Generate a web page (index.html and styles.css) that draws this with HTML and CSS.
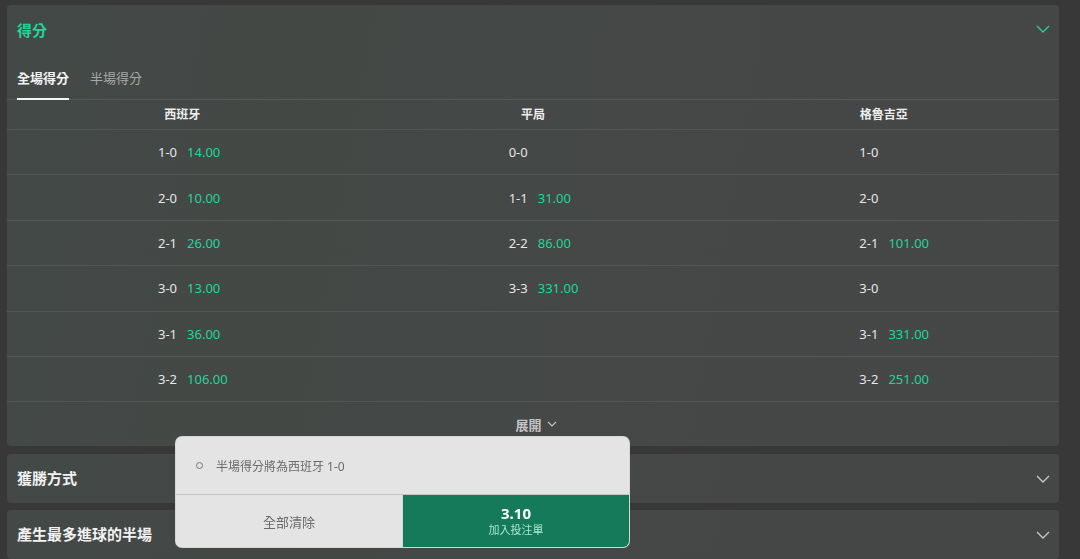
FILE: index.html
```html
<!DOCTYPE html>
<html>
<head>
	<title>得分</title>
	<meta charset="utf-8">
	<meta name="viewport" content="width=device-width, initial-scale=1">
	<link rel="stylesheet" href="styles.css">
</head>
<body>
	<div class="panel main">
		<div class="panel-head">
			<span class="panel-title active">得分</span>
			<svg class="chev green" width="14" height="8" viewBox="0 0 14 8"><polyline points="1,1 7,7 13,1" fill="none" stroke="currentColor" stroke-width="1.3"/></svg>
		</div>
		<div class="tabs">
			<span class="tab selected">全場得分</span>
			<span class="tab">半場得分</span>
		</div>
		<div class="grid head-row">
			<div class="col-title">西班牙</div>
			<div class="col-title">平局</div>
			<div class="col-title">格魯吉亞</div>
		</div>
		<div class="rows"></div>
		<div class="more">展開
			<svg width="10" height="6" viewBox="0 0 10 6"><polyline points="1,1 5,5 9,1" fill="none" stroke="currentColor" stroke-width="1.1"/></svg>
		</div>
	</div>

	<div class="panel closed">
		<div class="panel-head">
			<span class="panel-title">獲勝方式</span>
			<svg class="chev" width="14" height="8" viewBox="0 0 14 8"><polyline points="1,1 7,7 13,1" fill="none" stroke="currentColor" stroke-width="1.3"/></svg>
		</div>
	</div>

	<div class="panel closed">
		<div class="panel-head">
			<span class="panel-title">產生最多進球的半場</span>
			<svg class="chev" width="14" height="8" viewBox="0 0 14 8"><polyline points="1,1 7,7 13,1" fill="none" stroke="currentColor" stroke-width="1.3"/></svg>
		</div>
	</div>

	<div class="slip">
		<div class="slip-item">
			<span class="dot"></span>
			<span>半場得分將為西班牙 1-0</span>
		</div>
		<div class="slip-actions">
			<button class="clear">全部清除</button>
			<button class="add">
				<span class="price">3.10</span>
				<span class="add-label">加入投注單</span>
			</button>
		</div>
	</div>

<script>
	const rows = [
		[['1-0', '14.00'], ['0-0', ''], ['1-0', '']],
		[['2-0', '10.00'], ['1-1', '31.00'], ['2-0', '']],
		[['2-1', '26.00'], ['2-2', '86.00'], ['2-1', '101.00']],
		[['3-0', '13.00'], ['3-3', '331.00'], ['3-0', '']],
		[['3-1', '36.00'], null, ['3-1', '331.00']],
		[['3-2', '106.00'], null, ['3-2', '251.00']]
	];

	const container = document.querySelector('.rows');
	let html = '';
	rows.forEach(row => {
		html += '<div class="grid row">';
		row.forEach(cell => {
			if (!cell) {
				html += '<div class="cell"></div>';
				return;
			}
			html += `
			<div class="cell">
				<span class="score">${cell[0]}</span>
				<span class="odds">${cell[1]}</span>
			</div>`;
		});
		html += '</div>';
	});
	container.innerHTML = html;
</script>
</body>
</html>
```

FILE: styles.css
```css
body {
	margin: 0;
	padding-top: 5px;
	background-color: #383838;
	font-family: "Noto Sans", "Noto Sans CJK TC", sans-serif;
	color: #e8e8e8;
	overflow: hidden;
	height: 554px;
}

.panel {
	margin: 0 21px 7px 7px;
	background: linear-gradient(100deg, #434946 0%, #444846 50%, #454746 100%);
	border-radius: 4px;
}

.panel.main {
	margin-bottom: 8px;
}

.panel-head {
	height: 50px;
	display: flex;
	align-items: center;
	justify-content: space-between;
	padding: 0 9px 0 10px;
}

.closed .panel-head {
	height: 49px;
}

.panel-title {
	font-size: 15px;
	font-weight: 700;
	color: #f2f2f2;
	margin-top: -2px;
}

.panel-title.active {
	color: #1fd69a;
	font-weight: 600;
}

.chev {
	color: #c9c9c9;
}

.chev.green {
	color: #1fd69a;
	margin-top: -2px;
}

.tabs {
	display: flex;
	gap: 21px;
	padding: 0 10px;
	height: 45px;
	border-bottom: 1px solid #555a58;
	box-sizing: border-box;
}

.tab {
	font-size: 13px;
	color: #a8aaa9;
	display: flex;
	align-items: center;
	box-sizing: border-box;
	border-bottom: 2px solid transparent;
	margin-bottom: -1px;
	padding-top: 1px;
}

.tab.selected {
	color: #f4f4f4;
	font-weight: 700;
	border-bottom-color: #f4f4f4;
}

.grid {
	display: grid;
	grid-template-columns: repeat(3, 1fr);
	border-bottom: 1px solid #535856;
}

.head-row {
	height: 30px;
	box-sizing: border-box;
}

.col-title {
	font-size: 12px;
	font-weight: 700;
	text-align: center;
	line-height: 29px;
	color: #eeeeee;
}

.row {
	height: 45.4px;
	box-sizing: border-box;
}

.cell {
	display: flex;
	align-items: center;
	padding-left: 151px;
	font-size: 13px;
}

.score {
	color: #e6e6e6;
	margin-right: 10px;
}

.odds {
	color: #1fd69a;
}

.more {
	height: 44px;
	display: flex;
	align-items: center;
	justify-content: center;
	gap: 5px;
	font-size: 13px;
	font-weight: 600;
	color: #c4c4c4;
	padding-left: 6px;
}

.slip {
	position: fixed;
	left: 176px;
	top: 437px;
	width: 453px;
	height: 110px;
	background-color: #e4e4e4;
	border-radius: 6px;
	overflow: hidden;
	box-shadow: 0 0 0 1px #d6d6d6;
	display: flex;
	flex-direction: column;
}

.slip-item {
	height: 58px;
	display: flex;
	align-items: center;
	gap: 13px;
	padding-left: 20px;
	font-size: 12px;
	color: #6a6a6a;
	border-bottom: 1px solid #c4c4c4;
	box-sizing: border-box;
}

.dot {
	width: 5px;
	height: 5px;
	border: 1px solid #777;
	border-radius: 50%;
}

.slip-actions {
	flex: 1;
	display: grid;
	grid-template-columns: 226px 1fr;
}

button {
	border: none;
	font-family: inherit;
	margin: 0;
	padding: 0;
	cursor: pointer;
}

.clear {
	background-color: #e4e4e4;
	color: #6a6a6a;
	font-size: 13px;
}

.add {
	background-color: #157a5a;
	border-left: 1px solid #cfd8d4;
	display: flex;
	flex-direction: column;
	align-items: center;
	justify-content: center;
	padding-bottom: 2px;
}

.price {
	color: #ffffff;
	font-size: 15px;
	font-weight: 700;
	line-height: 18px;
}

.add-label {
	color: #a9e6cc;
	font-size: 11px;
	line-height: 15px;
}
```
